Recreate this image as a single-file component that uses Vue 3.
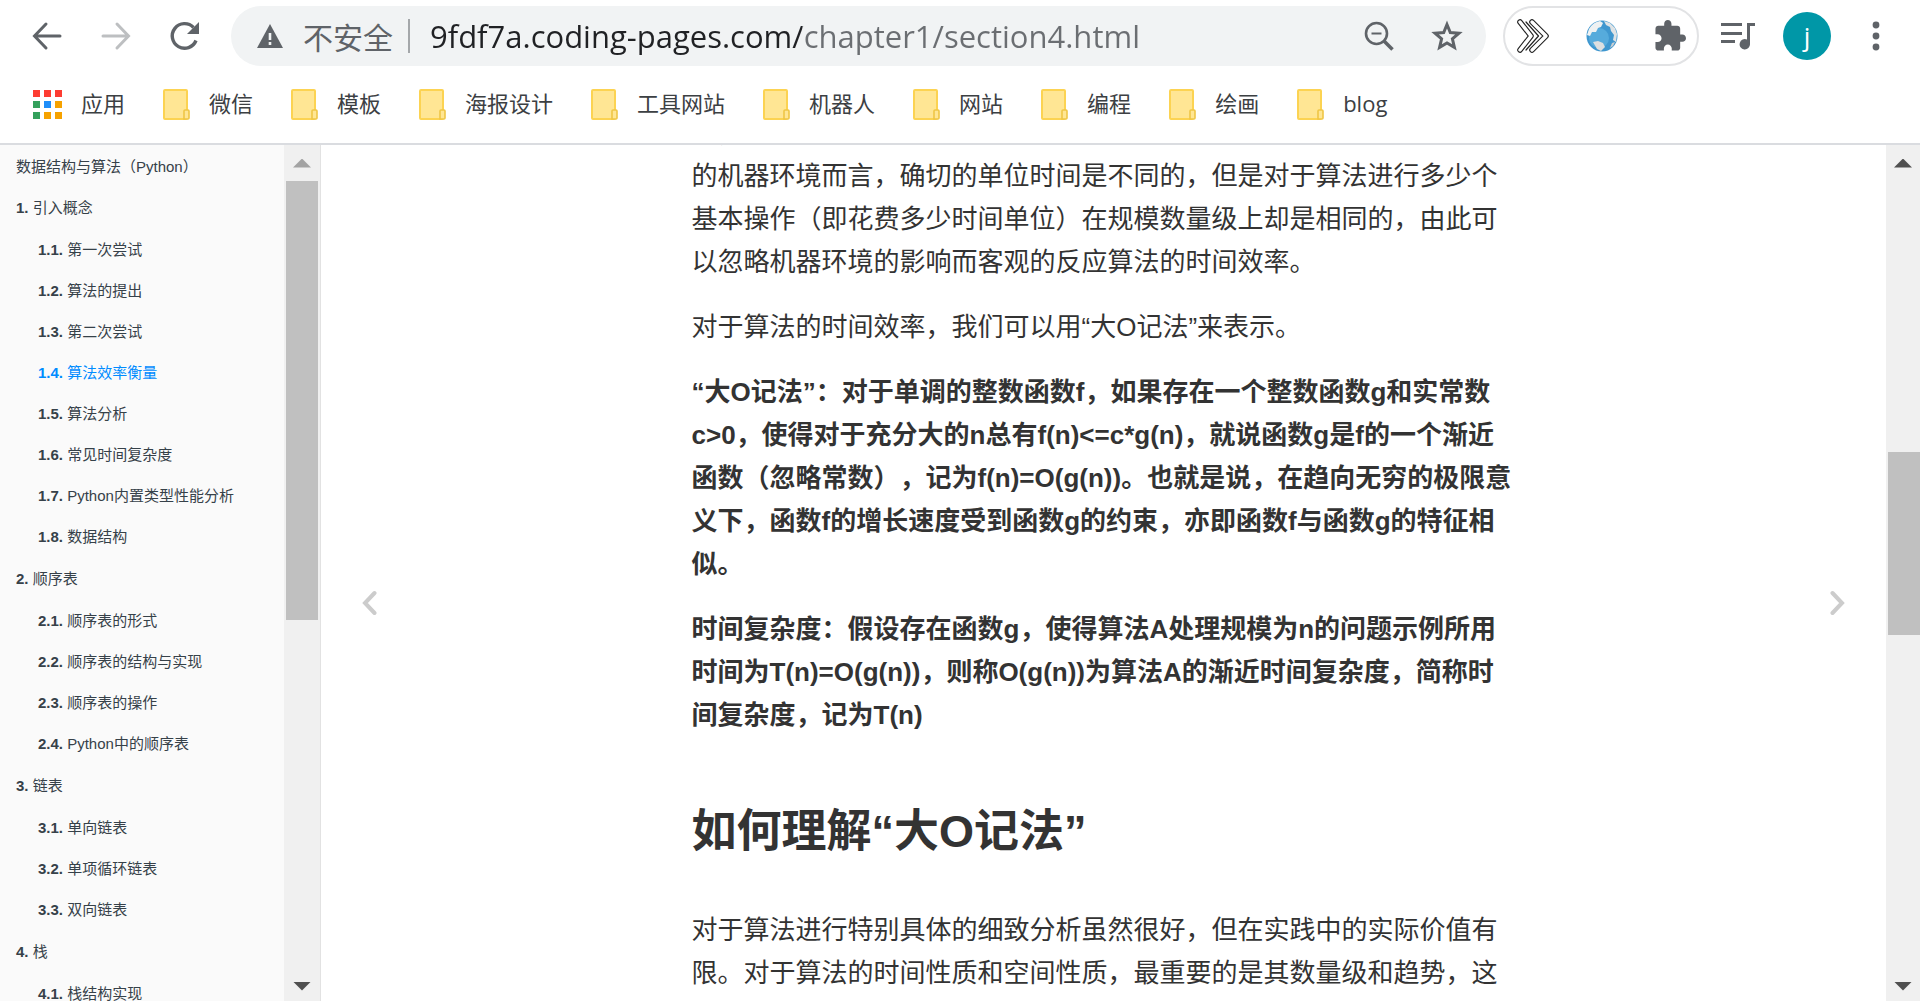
<script setup>
import { ref } from 'vue'

const url = ref('9fdf7a.coding-pages.com/chapter1/section4.html')

const bookmarks = ['微信', '模板', '海报设计', '工具网站', '机器人', '网站', '编程', '绘画', 'blog']

const appColors = [
  '#fd3c32', '#fd3c32', '#fd3c32',
  '#34a05c', '#1f8ef9', '#f6a200',
  '#34a05c', '#f6a200', '#f6a200',
]

const activeSection = '1.4.'

const chapters = [
  {
    no: '1.',
    title: '引入概念',
    sections: ['第一次尝试', '算法的提出', '第二次尝试', '算法效率衡量', '算法分析', '常见时间复杂度', 'Python内置类型性能分析', '数据结构'],
  },
  { no: '2.', title: '顺序表', sections: ['顺序表的形式', '顺序表的结构与实现', '顺序表的操作', 'Python中的顺序表'] },
  { no: '3.', title: '链表', sections: ['单向链表', '单项循环链表', '双向链表'] },
  { no: '4.', title: '栈', sections: ['栈结构实现'] },
]
</script>

<template>
  <div class="window">
    <header class="chrome">
      <div class="toolbar">
        <button class="nav-btn" aria-label="后退">
          <svg width="30" height="30" viewBox="0 0 30 30" fill="none" stroke="#5f6368" stroke-width="3" stroke-linecap="round">
            <path d="M28 15H3M14 3L2.500 15L14 27" />
          </svg>
        </button>
        <button class="nav-btn" aria-label="前进">
          <svg width="30" height="30" viewBox="0 0 30 30" fill="none" stroke="#bdbfc1" stroke-width="3" stroke-linecap="round">
            <path d="M2 15H27M16 3L27.500 15L16 27" />
          </svg>
        </button>
        <button class="nav-btn" aria-label="重新加载">
          <svg width="32" height="32" viewBox="0 0 32 32">
            <path d="M27 20.500A12.300 12.300 0 1 1 24.500 7.500" fill="none" stroke="#5f6368" stroke-width="3.400" />
            <path d="M30 2V14H18Z" fill="#5f6368" />
          </svg>
        </button>

        <div class="omnibox">
          <svg class="warn" width="26" height="24" viewBox="0 0 26 24">
            <path d="M13 0L26 24H0Z" fill="#5f6368" />
            <path d="M13 9V16M13 18V21" stroke="#f1f3f4" stroke-width="2.600" />
          </svg>
          <label class="insecure" for="address">不安全</label>
          <span class="divider"></span>
          <input id="address" v-model="url" class="address" type="text" spellcheck="false" />
          <button class="icon-btn" aria-label="缩放">
            <svg width="30" height="30" viewBox="0 0 30 30" fill="none" stroke="#5f6368">
              <circle cx="12.500" cy="12.500" r="10.500" stroke-width="2.600" />
              <path d="M7.500 12.500H17.500" stroke-width="2" />
              <path d="M20 20L28.500 28.500" stroke-width="3.600" />
            </svg>
          </button>
          <button class="icon-btn star" aria-label="收藏">
            <svg width="32" height="32" viewBox="0 0 32 32">
              <path d="M16 4.500L19.300 12.500L28 13.200L21.400 18.900L23.400 27.400L16 22.900L8.600 27.400L10.600 18.900L4 13.200L12.700 12.500Z" fill="none" stroke="#5f6368" stroke-width="3" />
            </svg>
          </button>
        </div>

        <div class="extensions">
          <button class="icon-btn" aria-label="扩展">
            <svg width="34" height="36" viewBox="0 0 34 36" stroke-linejoin="round" stroke-linecap="round" fill="none">
              <path d="M4 4L15 18L4 32" stroke="#222" stroke-width="5.600" />
              <path d="M4 4L15 18L4 32" stroke="#fff" stroke-width="3.400" />
              <path d="M16 4L30 18L16 32" stroke="#222" stroke-width="5.600" />
              <path d="M16 4L30 18L16 32" stroke="#fff" stroke-width="3.400" />
              <path d="M10 4L22.500 18L10 32" stroke="#222" stroke-width="1.200" />
            </svg>
          </button>
          <button class="icon-btn" aria-label="网络">
            <svg width="32" height="32" viewBox="0 0 32 32">
              <circle cx="16" cy="16" r="15.500" fill="#3f97cf" />
              <circle cx="13" cy="18" r="10" fill="#56abdc" />
              <path d="M3 9Q7 2 14 1L17 3L15 7L12 8L10 12L6 12L4 16L1 15Z" fill="#eef1f2" />
              <path d="M18 1L24 3L29 8L31 14L30 22L27 20L28 15L25 11L24 7L20 5Z" fill="#dfe3e5" />
              <path d="M7 22L12 21L17 23L19 27L15 31L11 29Z" fill="#dcdfe0" />
              <path d="M26 23L29 22L27 26L24 28Z" fill="#c9ced1" />
            </svg>
          </button>
          <button class="icon-btn" aria-label="扩展程序">
            <svg width="32" height="32" viewBox="1 1 22 22">
              <path fill="#5f6368" d="M20.500 11H19V7c0-1.100-.9-2-2-2h-4V3.500C13 2.120 11.880 1 10.500 1S8 2.120 8 3.500V5H4c-1.100 0-1.990.9-1.990 2v3.800H3.500c1.490 0 2.700 1.210 2.700 2.700s-1.210 2.700-2.700 2.700H2V20c0 1.100.9 2 2 2h3.800v-1.500c0-1.490 1.210-2.700 2.700-2.700 1.490 0 2.700 1.210 2.700 2.700V22H17c1.100 0 2-.9 2-2v-4h1.500c1.380 0 2.500-1.120 2.500-2.500S21.880 11 20.500 11z" />
            </svg>
          </button>
        </div>

        <button class="icon-btn media" aria-label="媒体控件">
          <svg width="34" height="28" viewBox="0 0 34 28" fill="#5f6368">
            <path d="M0 1H21V4H0ZM0 10H21V13H0ZM0 18H14V21H0Z" />
            <path d="M26 1H34V4H29V22A5.200 5.200 0 1 1 26 17.600Z" />
          </svg>
        </button>
        <button class="avatar" aria-label="用户 j">j</button>
        <button class="icon-btn menu" aria-label="菜单">
          <svg width="8" height="30" viewBox="0 0 8 30" fill="#5f6368">
            <circle cx="4" cy="4" r="3.400" />
            <circle cx="4" cy="15" r="3.400" />
            <circle cx="4" cy="26" r="3.400" />
          </svg>
        </button>
      </div>

      <nav class="bookmarks" aria-label="书签栏">
        <a href="#" class="bookmark">
          <svg width="29" height="30" viewBox="0 0 29 30">
            <rect v-for="(c, i) in appColors" :key="i" :x="(i % 3) * 11" :y="Math.floor(i / 3) * 11" width="7" height="7" :fill="c" />
          </svg>
          <span>应用</span>
        </a>
        <a v-for="b in bookmarks" :key="b" href="#" class="bookmark">
          <svg width="27" height="31" viewBox="0 0 27 31">
            <rect x="1" y="1" width="23" height="29" rx="1" fill="#ffe694" stroke="#fcd352" stroke-width="2" />
            <path d="M21 30V22Q21 21 22 21H25Q26 21 26 22V29Q26 30 25 30Z" fill="#ffe694" stroke="#efc646" stroke-width="1.600" />
          </svg>
          <span>{{ b }}</span>
        </a>
      </nav>
    </header>

    <div class="page">
      <aside class="sidebar">
        <nav class="toc" aria-label="目录">
          <a href="#" class="row">数据结构与算法（Python）</a>
          <section v-for="(ch, ci) in chapters" :key="ch.no">
            <a href="#" class="row"><b>{{ ch.no }}</b> {{ ch.title }}</a>
            <ul>
              <li v-for="(s, si) in ch.sections" :key="s">
                <a href="#" class="row" :class="{ active: `${ci + 1}.${si + 1}.` === activeSection }"><b>{{ ci + 1 }}.{{ si + 1 }}.</b> {{ s }}</a>
              </li>
            </ul>
          </section>
        </nav>
        <div class="scrollbar side-scroll" aria-hidden="true">
          <span class="arrow up dim"></span>
          <span class="thumb"></span>
          <span class="rest"></span>
          <span class="arrow down"></span>
        </div>
      </aside>

      <main class="content">
        <a href="#" class="turn" aria-label="上一页">
          <svg width="15" height="26" viewBox="0 0 15 26"><path d="M12.500 3L3 13L12.500 23" fill="none" stroke="#ccc" stroke-width="4" stroke-linecap="round" /></svg>
        </a>
        <article>
          <p>
            位，那么有多少个基本操作就代表会花费多少时间单位。算然对于不同<br />
            的机器环境而言，确切的单位时间是不同的，但是对于算法进行多少个<br />
            基本操作（即花费多少时间单位）在规模数量级上却是相同的，由此可<br />
            以忽略机器环境的影响而客观的反应算法的时间效率。
          </p>
          <p>对于算法的时间效率，我们可以用“大O记法”来表示。</p>
          <p>
            <strong>“大O记法”：对于单调的整数函数f，如果存在一个整数函数g和实常数<br />
            c&gt;0，使得对于充分大的n总有f(n)&lt;=c*g(n)，就说函数g是f的一个渐近<br />
            函数（忽略常数），记为f(n)=O(g(n))。也就是说，在趋向无穷的极限意<br />
            义下，函数f的增长速度受到函数g的约束，亦即函数f与函数g的特征相<br />
            似。</strong>
          </p>
          <p>
            <strong>时间复杂度：假设存在函数g，使得算法A处理规模为n的问题示例所用<br />
            时间为T(n)=O(g(n))，则称O(g(n))为算法A的渐近时间复杂度，简称时<br />
            间复杂度，记为T(n)</strong>
          </p>
          <h1>如何理解“大O记法”</h1>
          <p>
            对于算法进行特别具体的细致分析虽然很好，但在实践中的实际价值有<br />
            限。对于算法的时间性质和空间性质，最重要的是其数量级和趋势，这
          </p>
        </article>
        <a href="#" class="turn" aria-label="下一页">
          <svg width="15" height="26" viewBox="0 0 15 26"><path d="M2.500 3L12 13L2.500 23" fill="none" stroke="#ccc" stroke-width="4" stroke-linecap="round" /></svg>
        </a>
      </main>

      <div class="scrollbar page-scroll" aria-hidden="true">
        <span class="arrow up"></span>
        <span class="before"></span>
        <span class="thumb"></span>
        <span class="rest"></span>
        <span class="arrow down"></span>
      </div>
    </div>
  </div>
</template>

<style>
body {
  margin: 0;
  background: #fff;
}
</style>

<style scoped>
.window {
  display: flex;
  flex-direction: column;
  height: 100vh;
  overflow: hidden;
  font-family: "Liberation Sans", "Noto Sans CJK SC", sans-serif;
  text-spacing-trim: space-all;
}

button {
  display: flex;
  align-items: center;
  justify-content: center;
  flex: none;
  padding: 0;
  border: 0;
  background: none;
}

a {
  color: inherit;
  text-decoration: none;
}

svg {
  display: block;
  flex: none;
}

.chrome {
  flex: none;
  border-bottom: 2px solid #dadce0;
  font-family: "Open Sans", "Noto Sans CJK SC", sans-serif;
}

.toolbar {
  display: flex;
  align-items: center;
  height: 72px;
  padding: 0 40px 0 12px;
}

.nav-btn {
  width: 69px;
  height: 60px;
}

.omnibox {
  display: flex;
  align-items: center;
  flex: 1;
  min-width: 0;
  height: 60px;
  margin-left: 12px;
  padding: 0 23px 0 26px;
  box-sizing: border-box;
  border-radius: 30px;
  background: #f1f3f4;
}

.insecure {
  margin-left: 20px;
  color: #5f6368;
  font-size: 30px;
  white-space: nowrap;
}

.divider {
  width: 2px;
  height: 34px;
  margin: 0 20px 0 15px;
  background: #a4a7aa;
}

.address {
  flex: 1;
  min-width: 0;
  padding: 0;
  border: 0;
  outline: 0;
  background: linear-gradient(to right, #202124 372px, #6b6e72 372px);
  background-clip: text;
  -webkit-background-clip: text;
  color: transparent;
  font-family: inherit;
  font-size: 31px;
  line-height: 44px;
}

.star {
  margin-left: 37px;
}

.extensions {
  display: flex;
  align-items: center;
  justify-content: space-between;
  width: 196px;
  height: 60px;
  margin-left: 17px;
  padding: 0 11px;
  box-sizing: border-box;
  border: 2px solid #e2e3e5;
  border-radius: 30px;
}

.media {
  margin-left: 22px;
}

.avatar {
  width: 48px;
  height: 48px;
  margin-left: 28px;
  border-radius: 50%;
  background: #0097a7;
  color: #fff;
  font-family: inherit;
  font-size: 26px;
}

.menu {
  margin-left: 41px;
}

.bookmarks {
  display: flex;
  align-items: center;
  gap: 38px;
  height: 65px;
  padding: 0 33px 6px;
  color: #3c4043;
  font-size: 22px;
}

.bookmark {
  display: flex;
  align-items: center;
  gap: 19px;
  white-space: nowrap;
}

.bookmark span {
  padding-bottom: 4px;
  line-height: 24px;
}

.page {
  display: flex;
  flex: 1;
  min-height: 0;
}

.sidebar {
  display: flex;
  flex: none;
  width: 320px;
  border-right: 1px solid #e2e2e2;
  background: #fafafa;
}

.toc {
  flex: 1;
  min-width: 0;
  overflow: hidden;
  padding: 1px 0 0 16px;
  color: #364149;
  font-size: 15px;
}

.row {
  display: block;
  line-height: 41px;
  white-space: nowrap;
}

.toc ul {
  margin: 0;
  padding: 1px 0 1px 22px;
  list-style: none;
}

.row.active {
  color: #008cff;
}

.scrollbar {
  display: flex;
  flex-direction: column;
  flex: none;
  background: #f0f0f0;
}

.side-scroll {
  width: 36px;
}

.page-scroll {
  width: 34px;
}

.arrow {
  display: flex;
  align-items: center;
  justify-content: center;
  flex: none;
  height: 36px;
}

.arrow.down {
  height: 30px;
}

.arrow::before {
  content: "";
  width: 18px;
  height: 9px;
  background: #505050;
}

.arrow.up::before {
  clip-path: polygon(50% 0, 100% 100%, 0 100%);
}

.arrow.down::before {
  clip-path: polygon(0 0, 100% 0, 50% 100%);
}

.arrow.dim::before {
  background: #a3a3a3;
}

.thumb {
  margin-left: 2px;
  background: #c0c0c0;
}

.side-scroll .thumb {
  flex: 439;
  margin-right: 2px;
}

.side-scroll .rest {
  flex: 351;
}

.page-scroll .before {
  flex: 271;
}

.page-scroll .thumb {
  flex: 183;
}

.page-scroll .rest {
  flex: 336;
}

.content {
  display: flex;
  flex: 1;
  justify-content: space-between;
  min-width: 0;
  overflow: hidden;
  padding: 0 41px;
}

.turn {
  display: flex;
  align-items: center;
  padding-top: 60px;
}

article {
  width: 824px;
  margin-top: -33px;
  color: #333;
  font-size: 26px;
  line-height: 43px;
  white-space: nowrap;
}

p {
  margin: 0 0 22px;
}

h1 {
  margin: 57px 0 39px;
  font-size: 45px;
  line-height: 76px;
}
</style>
